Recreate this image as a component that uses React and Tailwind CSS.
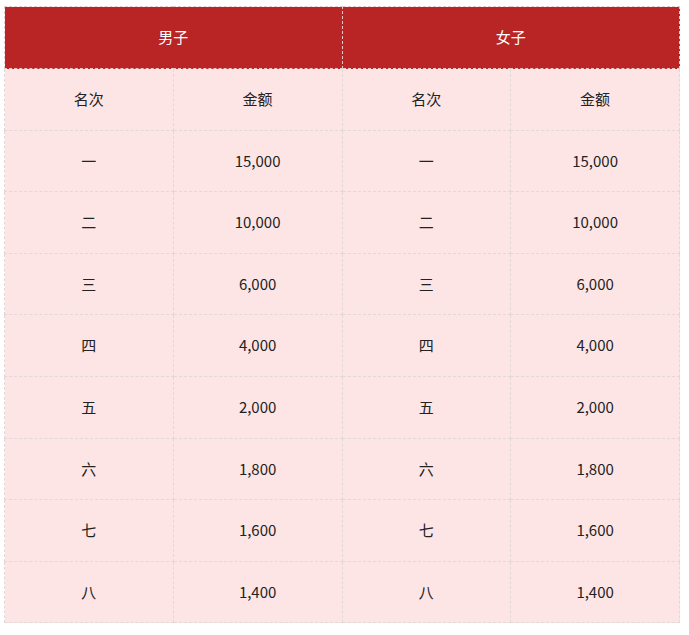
const ROWS = [
  ["一", "15,000"],
  ["二", "10,000"],
  ["三", "6,000"],
  ["四", "4,000"],
  ["五", "2,000"],
  ["六", "1,800"],
  ["七", "1,600"],
  ["八", "1,400"],
];

const cell = "h-[61.6px] w-[169px] border border-dashed border-[#e2d8d8] text-center align-middle";

export default function App() {
  return (
    <div
      className="bg-white pl-[4px] pt-[6px] w-[689px] h-[635px] text-[15px] text-[#222]"
      style={{ fontFamily: '"Microsoft YaHei", "Noto Sans CJK SC", "Noto Sans", sans-serif' }}
    >
      <table className="border-collapse w-[676px] table-fixed border border-dashed border-[#d8d0d0]">
        <thead>
          <tr className="bg-[#b92424] text-white">
            <th colSpan={2} className="h-[62px] font-normal border border-dashed border-[#e8c8c8]">
              男子
            </th>
            <th colSpan={2} className="h-[62px] font-normal border border-dashed border-[#e8c8c8]">
              女子
            </th>
          </tr>
        </thead>
        <tbody className="bg-[#fde5e5]">
          <tr>
            <td className={cell}>名次</td>
            <td className={cell}>金额</td>
            <td className={cell}>名次</td>
            <td className={cell}>金额</td>
          </tr>
          {ROWS.map(([rank, amount]) => (
            <tr key={rank}>
              <td className={cell}>{rank}</td>
              <td className={cell}>{amount}</td>
              <td className={cell}>{rank}</td>
              <td className={cell}>{amount}</td>
            </tr>
          ))}
        </tbody>
      </table>
    </div>
  );
}
